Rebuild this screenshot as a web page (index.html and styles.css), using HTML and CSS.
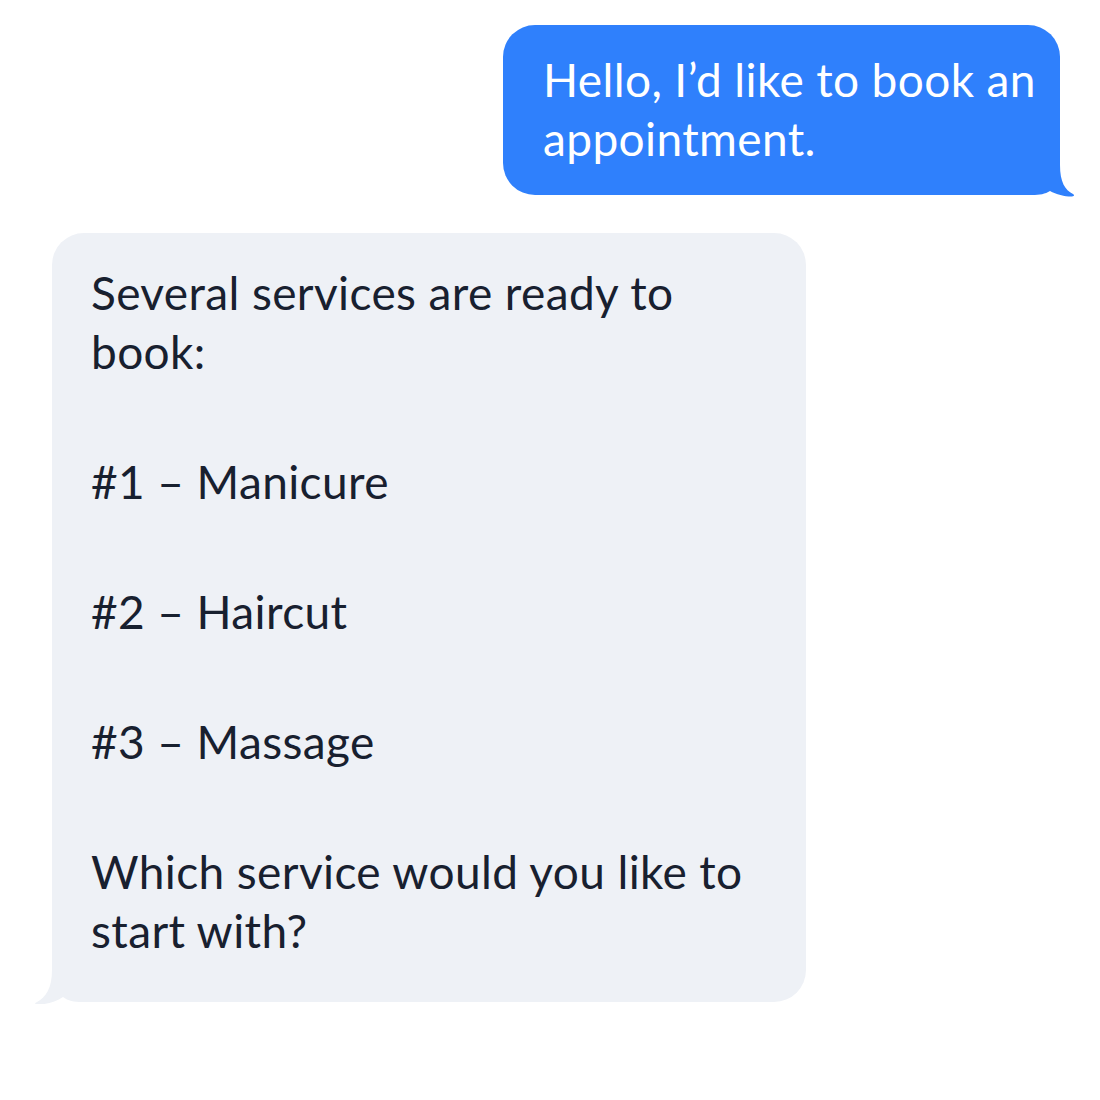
FILE: index.html
```html
<!DOCTYPE html>
<html lang="en">
<head>
<meta charset="utf-8">
<title>Chat</title>
<link rel="stylesheet" href="styles.css">
</head>
<body>
<div class="chat">
  <div class="msg out">
    <p>Hello, I’d like to book an<br>appointment.</p>
    <svg class="tail tail-out" width="56" height="44" viewBox="0 0 56 44" aria-hidden="true">
      <path d="M40 0 L40 10 C40 27 45 35 53 39 C55 40.5 54 41.5 51 41.5 C45 41.5 36 39.5 30 36 C25 39 20 40 12 40 L0 40 L0 0 Z"/>
    </svg>
  </div>
  <div class="msg in">
    <p>Several services are ready to<br>book:</p>
    <p>#1 – Manicure</p>
    <p>#2 – Haircut</p>
    <p>#3 – Massage</p>
    <p>Which service would you like to<br>start with?</p>
    <svg class="tail tail-in" width="60" height="44" viewBox="0 0 60 44" aria-hidden="true">
      <path d="M20 0 L20 8 C20 26 14 35 5 40 C2 41.5 3 42.5 6 42.5 C14 42.5 24 40 31 35 C36 39 42 40 50 40 L60 40 L60 0 Z"/>
    </svg>
  </div>
</div>
</body>
</html>
```
FILE: styles.css
```css
html, body {
  margin: 0;
  padding: 0;
  background: #ffffff;
}

body {
  width: 1100px;
  height: 1100px;
  font-family: Lato, "Noto Sans", "Liberation Sans", sans-serif;
}

.chat {
  display: flex;
  flex-direction: column;
  gap: 38px;
  padding: 25px 40px 0 52px;
}

.msg {
  position: relative;
  box-sizing: border-box;
  border-radius: 32px;
  font-size: 46px;
  line-height: 59px;
  letter-spacing: 0.38px;
}

.msg p {
  margin: 0;
  white-space: nowrap;
}

.msg p + p {
  margin-top: 71px;
}

.out {
  align-self: flex-end;
  width: 557px;
  padding: 25px 20px 27px 40px;
  background: #2f80fc;
  color: #ffffff;
}

.in {
  align-self: flex-start;
  width: 754px;
  padding: 30px 30px 42px 39px;
  background: #eef1f6;
  color: #18202f;
}

.tail {
  position: absolute;
  bottom: 0;
}

.tail-out {
  right: -16px;
  bottom: -2px;
  fill: #2f80fc;
}

.tail-out path {
  transform: translateY(2px);
}

.tail-in {
  left: -20px;
  bottom: -2px;
  fill: #eef1f6;
}

.tail-in path {
  transform: translateY(2px);
}
```
